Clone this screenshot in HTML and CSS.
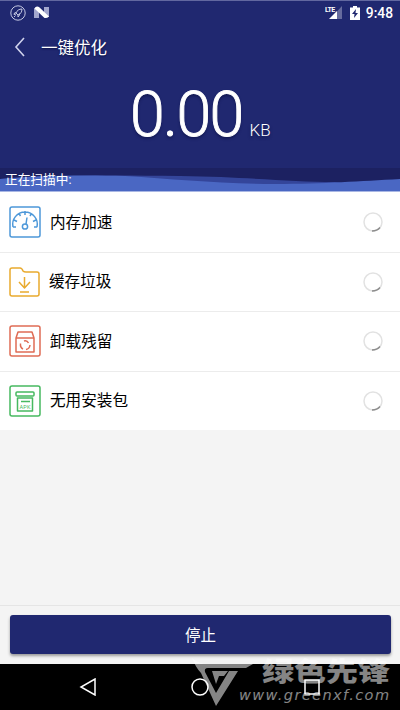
FILE: index.html
```html
<!DOCTYPE html>
<html lang="zh-CN">
<head>
<meta charset="utf-8">
<title>一键优化</title>
<link rel="stylesheet" href="styles.css">
</head>
<body>
<div class="screen">
  <header class="header">
    <svg class="waves" viewBox="0 0 400 24" preserveAspectRatio="none">
      <rect width="400" height="24" fill="#1c2161"/>
      <path d="M0 11 C50 7 110 7 180 8 C250 9 290 14 335 14 L400 24 H0Z" fill="#34459a"/>
      <path d="M0 11 C35 7 90 7 125 8 C175 11 220 16 275 16 C325 16 360 13 400 11 V24 H0Z" fill="#4a67c3"/>
      <path d="M0 23.5H400" stroke="#a9b7e4"/>
    </svg>
    <div class="status">
      <svg class="rocket" viewBox="0 0 16 16"><circle cx="8" cy="8" r="7.2"/><path d="M12 4C9 4 7 5.500 6 8L8 10C10.500 9 12 7 12 4ZM6 7.500 4.500 8 4 9.500 6 9M8 10 8 12 9.300 10.500 9.500 8.500M5.500 10.500 4 12"/></svg>
      <svg class="android-n" viewBox="0 0 16 13"><path d="M0 2H5V12H0ZM10 1H15V11H10Z" fill="#a2a6cd"/><path d="M1 1.500Q3 0 5 1L15 10.500Q13 12.500 10.500 12L1 3Z" fill="#fff"/></svg>
      <span class="spacer"></span>
      <svg class="signal" viewBox="0 0 18 16"><path d="M17 1V14H5Z" fill="#666b9e"/><path d="M12 6V14H4Z" fill="#fff"/><text x="0" y="7">LTE</text></svg>
      <svg class="battery" viewBox="0 0 10 14"><path d="M0 1.500H3V0H7V1.500H10V14H0Z" fill="#fff"/><path d="M6 3 2 8H4.500L4 12 8 7H5.500Z" fill="#202870"/></svg>
      <span class="clock">9:48</span>
    </div>
    <div class="title"><svg class="back" viewBox="0 0 12 20"><path d="M10 1 2 10 10 19"/></svg><span>一键优化</span></div>
    <div class="size"><span class="number">0.00</span><span class="unit">KB</span></div>
    <div class="scanning">正在扫描中:</div>
  </header>
  <main class="list">
    <div class="row">
      <svg class="icon blue" viewBox="0 0 32 32"><rect x="1" y="1" width="30" height="30" rx="2"/><path d="M4 21H7M25 21H28M4 21A12.300 12.300 0 1 1 28 21M16 5V9M10 7.500 11.500 10M22.500 7.500 21 10M5 14 8 15.500M27 14 24 15.500M17 18 18 11.500"/><circle cx="16" cy="20.500" r="2.600"/></svg>
      <span class="label">内存加速</span><svg class="loader" viewBox="0 0 20 20"><circle cx="10" cy="10" r="9"/><path d="M9 19Q14 19 17 15.500"/></svg>
    </div>
    <div class="row">
      <svg class="icon orange" viewBox="0 0 32 32"><path d="M1 4Q1 2 3 2H11Q13 2 14 5Q15 6 17 6H28Q30 6 30 8V28Q30 30 28 30H3Q1 30 1 28ZM15.500 11V21M10 16 15.500 22 21 16M11 26H20"/></svg>
      <span class="label shift">缓存垃圾</span><svg class="loader" viewBox="0 0 20 20"><circle cx="10" cy="10" r="9"/><path d="M9 19Q14 19 17 15.500"/></svg>
    </div>
    <div class="row">
      <svg class="icon red" viewBox="0 0 32 32"><rect x="1" y="1" width="30" height="30" rx="2"/><path d="M7 13 9 7H23L25 13V27H7ZM7 13H25M15 16Q18 15 19.500 18M21 20Q20.500 24 17 24.500M14 24Q11 22.500 11.500 18.500"/></svg>
      <span class="label">卸载残留</span><svg class="loader" viewBox="0 0 20 20"><circle cx="10" cy="10" r="9"/><path d="M9 19Q14 19 17 15.500"/></svg>
    </div>
    <div class="row">
      <svg class="icon green" viewBox="0 0 32 32"><rect x="1" y="1" width="30" height="30" rx="2"/><rect x="7" y="7" width="18" height="4" rx="1"/><path d="M8.500 13V26H23.500V13ZM12 16.500H21"/><text x="10.500" y="24" textLength="11">APK</text></svg>
      <span class="label">无用安装包</span><svg class="loader" viewBox="0 0 20 20"><circle cx="10" cy="10" r="9"/><path d="M9 19Q14 19 17 15.500"/></svg>
    </div>
  </main>
  <div class="empty"></div>
  <footer class="footer"><button class="stop">停止</button></footer>
  <nav class="nav">
    <svg viewBox="0 0 18 18"><path d="M16 1V17L2 9Z"/></svg>
    <svg viewBox="0 0 18 18"><circle cx="9" cy="9" r="8"/></svg>
    <svg viewBox="0 0 18 18"><rect x="2" y="2" width="14" height="14"/></svg>
  </nav>
  <svg class="watermark" viewBox="0 0 208 70">
    <path d="M0 18Q4 28 9 33L24 66 46 31H37L24 53 13 32Q12 28 16 28H54L61 24H17Q6 24 0 18ZM20 31H36L32 36H27L24 44Z"/>
    <text class="brand" x="70" y="41" textLength="128" lengthAdjust="spacingAndGlyphs">绿色先锋</text>
    <text class="site" x="47" y="60" textLength="150" lengthAdjust="spacing">www.greenxf.com</text>
  </svg>
</div>
</body>
</html>
```
FILE: styles.css
```css
* { box-sizing: border-box; }
body { margin: 0; font-family: Roboto, "Noto Sans CJK SC", sans-serif; }
svg { display: block; flex: none; }
.screen { position: relative; width: 400px; height: 710px; display: flex; flex-direction: column; overflow: hidden; background: #f4f4f4; }
.header { position: relative; height: 192px; background: #202870; color: #fff; border-top: 1px solid #6268a0; flex: none; }
.waves { position: absolute; left: 0; bottom: 0; width: 400px; height: 24px; }
.status { height: 23px; display: flex; align-items: center; padding: 0 7px 0 10px; }
.rocket { width: 16px; height: 16px; fill: none; stroke: #c5c8e2; stroke-width: 1; }
.android-n { width: 16px; height: 13px; margin-left: 8px; }
.spacer { flex: 1; }
.signal { width: 18px; height: 16px; }
.signal text { font: 700 7px Roboto, sans-serif; fill: #fff; letter-spacing: -.5px; }
.battery { width: 10px; height: 14px; margin: 0 6px 0 7px; }
.clock { font-size: 13.8px; line-height: 20px; font-weight: 500; }
.title { height: 46px; display: flex; align-items: center; padding-left: 14px; font-size: 16.5px; text-shadow: 0 1px 2px #0b1045; }
.back { width: 12px; height: 20px; margin-right: 15px; fill: none; stroke: #cfd2ec; stroke-width: 1.6; }
.size { height: 96px; display: flex; align-items: baseline; padding: 8px 0 0 130px; text-shadow: 0 2px 3px #11174e; }
.number { font-size: 62.5px; line-height: 74px; font-weight: 300; letter-spacing: -1.6px; -webkit-text-stroke: .9px #fff; }
.unit { font-size: 17px; font-weight: 300; margin-left: 7px; }
.scanning { position: relative; padding-left: 5px; font-size: 12.7px; line-height: 28px; }
.list { height: 238px; display: grid; grid-template-rows: 60px 59px 60px 59px; background: #fff; }
.row { display: flex; align-items: center; padding: 0 17px 0 9px; box-shadow: inset 0 1px #ececec; }
.row:first-child { box-shadow: none; }
.icon { width: 32px; height: 32px; fill: none; stroke: currentColor; stroke-width: 1.5; stroke-linejoin: round; }
.icon text { font: 5.5px Roboto, sans-serif; fill: currentColor; stroke: none; }
.blue { color: #4d98d9; }
.orange { color: #e9aa2e; }
.red { color: #df6c55; }
.green { color: #47b960; }
.label { flex: 1; margin-left: 9px; padding-top: 1px; font-size: 15.6px; line-height: 24px; color: #000; }
.shift { margin-left: 8px; }
.loader { width: 20px; height: 20px; fill: none; stroke: #e2e2e2; stroke-width: 1.5; }
.loader path { stroke: #8d8d8d; }
.empty { flex: 1; margin: 0 1px 0 2px; }
.footer { height: 59px; border-top: 1px solid #e5e5e5; padding: 9px 9px 0 10px; flex: none; }
.stop { display: block; width: 100%; height: 39px; padding: 0; border: 0; border-radius: 3px; background: #202870; color: #fff; font: 15.5px/39px "Noto Sans CJK SC", sans-serif; box-shadow: 0 2px 3px #999; }
.nav { height: 46px; background: #000; display: flex; gap: 94px; padding: 14px 0 0 79px; flex: none; }
.nav svg { width: 18px; height: 18px; fill: none; stroke: #fff; stroke-width: 1.5; }
.watermark { position: absolute; left: 192px; top: 640px; width: 208px; height: 70px; fill: #fff; opacity: .52; }
.brand { font: 900 26px "Noto Sans CJK SC", sans-serif; }
.site { font: italic 14.5px "DejaVu Sans", sans-serif; }
```
